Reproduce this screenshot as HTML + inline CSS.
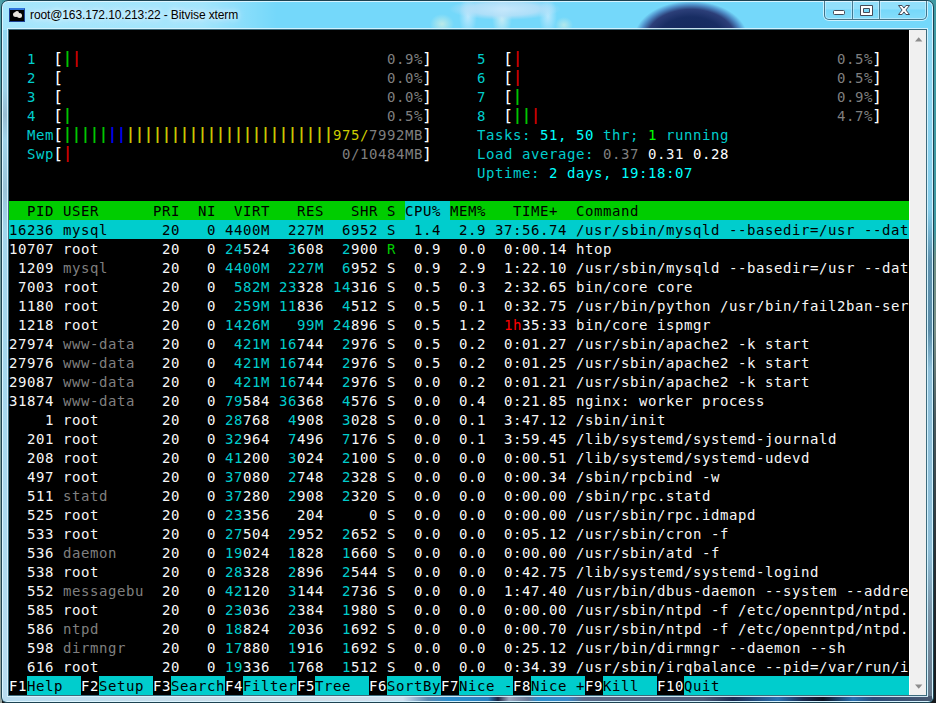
<!DOCTYPE html>
<html><head><meta charset="utf-8"><title>root@163.172.10.213:22 - Bitvise xterm</title>
<style>
html,body{margin:0;padding:0;}
body{width:936px;height:703px;overflow:hidden;position:relative;background:#2a3438;}
#desk{position:absolute;left:0;top:0;width:936px;height:703px;
 background:linear-gradient(180deg,#3f99a3 0px,#3f99a3 230px,#6f8f85 260px,#7a9088 330px,#4a5a5e 420px,#2a3034 560px,#15181c 703px);}
#deskL{position:absolute;left:0;top:0;width:2px;height:703px;background:linear-gradient(180deg,#4fa0a8 0,#4fa0a8 80px,#7a8f8a 120px,#6f9a9c 250px,#7fa09a 450px,#9aa59f 703px);}
#win{position:absolute;left:1px;top:0;width:931px;height:701px;border:1px solid #1d4352;border-radius:7px 7px 6px 6px;
 background:
  radial-gradient(ellipse 57px 38px at 689px 38px,#14285a 0,#182d63 58%,#2c3f79 78%,rgba(60,105,175,.65) 90%,rgba(116,216,250,0) 100%),
  radial-gradient(ellipse 56px 11px at 503px 8px,rgba(200,232,252,.95) 0,rgba(184,224,248,.85) 60%,rgba(116,216,250,0) 100%),
  radial-gradient(ellipse 9px 20px at 466px 15px,rgba(205,236,254,.8) 0,rgba(116,216,250,0) 100%),
  radial-gradient(ellipse 10px 19px at 500px 17px,rgba(215,240,245,.85) 0,rgba(116,216,250,0) 100%),
  radial-gradient(ellipse 9px 19px at 546px 15px,rgba(205,236,254,.75) 0,rgba(116,216,250,0) 100%),
  radial-gradient(ellipse 12px 10px at 440px 23px,rgba(205,238,228,.8) 0,rgba(116,216,250,0) 100%),
  radial-gradient(ellipse 9px 8px at 562px 24px,rgba(205,238,228,.7) 0,rgba(116,216,250,0) 100%),
  linear-gradient(90deg,rgba(255,255,255,.36) 0,rgba(255,255,255,.34) 200px,rgba(255,255,255,0) 275px),
  #74d8fa;
 box-shadow:inset 0 0 0 1px rgba(230,248,255,.85);overflow:hidden;}
#frameL,#frameR,#frameB{position:absolute;}
#frameL{left:1px;top:29px;width:5px;height:668px;background:linear-gradient(180deg,#93d8f1 0,#9dd2e8 60px,#98bdd2 85px,#a0d4ea 110px,#9ac4d8 160px,#a3d6ec 200px,#a6d8ee 400px,#b0daee 560px,#b8dcf0 668px);}
#frameR{left:926px;top:29px;width:4px;height:668px;background:linear-gradient(180deg,#8fd8f4 0,#86cdea 180px,#5f93b0 230px,#5a8ca8 300px,#8fc0da 340px,#8fbfd8 520px,#7d97aa 580px,#66788a 668px);}
#frameB{left:1px;top:695px;width:929px;height:5px;background:linear-gradient(90deg,#b8dcf0 0,#cfdde6 300px,#d0e0f0 400px,#5a88b0 425px,#2a90d0 445px,#2a80c0 485px,#1a2040 495px,#9aa8c0 506px,#6a7a98 525px,#2a90d0 535px,#3a88c8 565px,#5a6a88 580px,#4a5a78 700px,#1a2a50 730px,#2a70b0 775px,#1a2a50 800px,#0a1020 820px,#2a70b0 850px,#2a4a78 870px,#4a5a70 929px);}
#title{position:absolute;left:28px;top:6px;font:12px/16px "Liberation Sans",sans-serif;color:#000;white-space:pre;
 text-shadow:0 0 5px rgba(255,255,255,.75),0 0 9px rgba(255,255,255,.6),0 0 12px rgba(255,255,255,.5);letter-spacing:-0.11px;}
#icon{position:absolute;left:7px;top:7px;width:16px;height:14px;background:#000;border:1px solid #1b3f93;border-top:2px solid #2f74dc;box-sizing:border-box;overflow:hidden;}
#icon i{position:absolute;display:block;background:#e8e4dc;border-radius:50%;}
#caps{position:absolute;left:822px;top:-2px;width:101px;height:19px;border:1px solid rgba(40,80,100,.75);border-radius:0 0 5px 5px;
 box-shadow:0 0 0 1px rgba(225,247,255,.8),inset 0 0 0 1px rgba(215,243,255,.55);background:linear-gradient(180deg,rgba(255,255,255,.22) 0,rgba(255,255,255,.22) 9px,rgba(255,255,255,.02) 10px,rgba(255,255,255,.12) 19px);}
#caps b{position:absolute;top:0;height:19px;width:1px;background:rgba(40,80,100,.7);box-shadow:1px 0 0 rgba(215,243,255,.55),-1px 0 0 rgba(215,243,255,.55);}
#caps svg{position:absolute;left:0;top:0;}
#client{position:absolute;left:6px;top:28px;width:917px;height:665px;border:1px solid #3d6b7c;outline:1px solid rgba(220,245,255,.9);background:#000;}
#term{position:absolute;left:0;top:0;width:900px;height:665px;background:#000;overflow:hidden;font-family:'DejaVu Sans Mono','Liberation Mono',monospace;font-size:14px;letter-spacing:0.5715px;}
.r{position:absolute;left:0;width:900px;height:19px;line-height:19px;white-space:pre;}
.r span{position:absolute;top:0;height:19px;display:block;line-height:21px;}
.r span.b{transform:scaleY(1.15);transform-origin:0 18.5px;text-shadow:.5px 0 0 currentColor;}
.r span.k{transform:scale(1.2,1.08);transform-origin:4.5px 18px;}
#sb{position:absolute;left:900px;top:0;width:17px;height:665px;background:#f0f0f0;border-left:1px solid #fff;box-sizing:border-box;}
</style></head><body>
<div id="desk"></div><div id="deskL"></div>
<div id="win">
 <div id="frameL"></div><div id="frameR"></div><div id="frameB"></div>
 <div id="icon"><i style="left:3px;top:2px;width:6px;height:5px"></i><i style="left:7px;top:3px;width:5px;height:5px"></i><i style="left:5px;top:1px;width:4px;height:4px"></i></div>
 <div id="title">root@163.172.10.213:22 - Bitvise xterm</div>
 <div id="caps"><b style="left:27px"></b><b style="left:54px"></b>
  <svg width="101" height="19" viewBox="0 0 101 19">
   <rect x="8.5" y="10.5" width="11" height="4" rx="1" fill="#fff" stroke="#454a58" stroke-width="1"/>
   <path d="M35.5 5.5h12v10h-12z M38.5 8.5v4h6v-4z" fill="#fff" fill-rule="evenodd" stroke="#454a58" stroke-width="1" stroke-linejoin="round"/>
   <path d="M73.5 5.5h3.6l1.9 2.6 1.9-2.6h3.6l-3.6 4.5 3.6 4.5h-3.6l-1.9-2.6-1.9 2.6h-3.6l3.6-4.5z" fill="#fff" stroke="#454a58" stroke-width="1" stroke-linejoin="round"/>
  </svg>
 </div>
 <div id="client">
  <div id="term">
<div class="r" style="top:19px"><span style="left:18px;color:#00cdcd;">1  </span><span class="k" style="left:45px;color:#ffffff;">[</span><span class="b" style="left:54px;color:#00cd00;">|</span><span class="b" style="left:63px;color:#cd0000;">|</span><span style="left:378px;color:#7f7f7f;">0.9%</span><span class="k" style="left:414px;color:#ffffff;">]</span><span style="left:468px;color:#00cdcd;">5  </span><span class="k" style="left:495px;color:#ffffff;">[</span><span class="b" style="left:504px;color:#cd0000;">|</span><span style="left:828px;color:#7f7f7f;">0.5%</span><span class="k" style="left:864px;color:#ffffff;">]</span></div>
<div class="r" style="top:38px"><span style="left:18px;color:#00cdcd;">2  </span><span class="k" style="left:45px;color:#ffffff;">[</span><span style="left:378px;color:#7f7f7f;">0.0%</span><span class="k" style="left:414px;color:#ffffff;">]</span><span style="left:468px;color:#00cdcd;">6  </span><span class="k" style="left:495px;color:#ffffff;">[</span><span class="b" style="left:504px;color:#cd0000;">|</span><span style="left:828px;color:#7f7f7f;">0.5%</span><span class="k" style="left:864px;color:#ffffff;">]</span></div>
<div class="r" style="top:57px"><span style="left:18px;color:#00cdcd;">3  </span><span class="k" style="left:45px;color:#ffffff;">[</span><span style="left:378px;color:#7f7f7f;">0.0%</span><span class="k" style="left:414px;color:#ffffff;">]</span><span style="left:468px;color:#00cdcd;">7  </span><span class="k" style="left:495px;color:#ffffff;">[</span><span class="b" style="left:504px;color:#00cd00;">|</span><span style="left:828px;color:#7f7f7f;">0.9%</span><span class="k" style="left:864px;color:#ffffff;">]</span></div>
<div class="r" style="top:76px"><span style="left:18px;color:#00cdcd;">4  </span><span class="k" style="left:45px;color:#ffffff;">[</span><span class="b" style="left:54px;color:#00cd00;">|</span><span style="left:378px;color:#7f7f7f;">0.5%</span><span class="k" style="left:414px;color:#ffffff;">]</span><span style="left:468px;color:#00cdcd;">8  </span><span class="k" style="left:495px;color:#ffffff;">[</span><span class="b" style="left:504px;color:#00cd00;">||</span><span class="b" style="left:522px;color:#cd0000;">|</span><span style="left:828px;color:#7f7f7f;">4.7%</span><span class="k" style="left:864px;color:#ffffff;">]</span></div>
<div class="r" style="top:95px"><span style="left:18px;color:#00cdcd;">Mem</span><span class="k" style="left:45px;color:#ffffff;">[</span><span class="b" style="left:54px;color:#00cd00;">|||||</span><span class="b" style="left:99px;color:#0000ee;">||</span><span class="b" style="left:117px;color:#cdcd00;">|||||||||||||||||||||||</span><span style="left:324px;color:#cdcd00;">975/</span><span style="left:360px;color:#7f7f7f;">7992MB</span><span class="k" style="left:414px;color:#ffffff;">]</span><span style="left:468px;color:#00cdcd;">Tasks: </span><span style="left:531px;color:#00ffff;">51</span><span style="left:549px;color:#00ffff;">, </span><span style="left:567px;color:#00ffff;">50</span><span style="left:585px;color:#00cdcd;"> thr; </span><span style="left:639px;color:#00ff00;">1</span><span style="left:648px;color:#00cdcd;"> running</span></div>
<div class="r" style="top:114px"><span style="left:18px;color:#00cdcd;">Swp</span><span class="k" style="left:45px;color:#ffffff;">[</span><span class="b" style="left:54px;color:#cd0000;">|</span><span style="left:333px;color:#7f7f7f;">0/10484MB</span><span class="k" style="left:414px;color:#ffffff;">]</span><span style="left:468px;color:#00cdcd;">Load average: </span><span style="left:594px;color:#7f7f7f;">0.37 </span><span style="left:639px;color:#f7f7f7;">0.31 </span><span style="left:684px;color:#ffffff;">0.28</span></div>
<div class="r" style="top:133px"><span style="left:468px;color:#00cdcd;">Uptime: </span><span style="left:540px;color:#00ffff;">2 days, 19:18:07</span></div>
<div class="r" style="top:171px"><span style="left:0px;color:#000000;background:#00cd00;width:396px;">  PID USER      PRI  NI  VIRT   RES   SHR S </span><span style="left:396px;color:#000000;background:#00cdcd;width:45px;">CPU% </span><span style="left:441px;color:#000000;background:#00cd00;width:459px;">MEM%   TIME+  Command                              </span></div>
<div class="r" style="top:190px"><span style="left:0px;color:#000000;background:#00cdcd;width:900px;">16236 mysql      20   0 4400M  227M  6952 S  1.4  2.9 37:56.74 /usr/sbin/mysqld --basedir=/usr --dat</span></div>
<div class="r" style="top:209px"><span style="left:0px;color:#f7f7f7;">10707</span><span style="left:54px;color:#f7f7f7;">root</span><span style="left:144px;color:#f7f7f7;"> 20   0</span><span style="left:216px;color:#00cdcd;">24</span><span style="left:234px;color:#f7f7f7;">524</span><span style="left:270px;color:#00cdcd;"> 3</span><span style="left:288px;color:#f7f7f7;">608</span><span style="left:324px;color:#00cdcd;"> 2</span><span style="left:342px;color:#f7f7f7;">900</span><span style="left:378px;color:#00cd00;">R</span><span style="left:396px;color:#f7f7f7;"> 0.9  0.0</span><span style="left:486px;color:#f7f7f7;"> 0:00.14</span><span style="left:567px;color:#f7f7f7;">htop</span></div>
<div class="r" style="top:228px"><span style="left:0px;color:#f7f7f7;"> 1209</span><span style="left:54px;color:#7f7f7f;">mysql</span><span style="left:144px;color:#f7f7f7;"> 20   0</span><span style="left:216px;color:#00cdcd;">4400M</span><span style="left:270px;color:#00cdcd;"> 227M</span><span style="left:324px;color:#00cdcd;"> 6</span><span style="left:342px;color:#f7f7f7;">952</span><span style="left:378px;color:#f7f7f7;">S</span><span style="left:396px;color:#f7f7f7;"> 0.9  2.9</span><span style="left:486px;color:#f7f7f7;"> 1:22.10</span><span style="left:567px;color:#f7f7f7;">/usr/sbin/mysqld --basedir=/usr --dat</span></div>
<div class="r" style="top:247px"><span style="left:0px;color:#f7f7f7;"> 7003</span><span style="left:54px;color:#f7f7f7;">root</span><span style="left:144px;color:#f7f7f7;"> 20   0</span><span style="left:216px;color:#00cdcd;"> 582M</span><span style="left:270px;color:#00cdcd;">23</span><span style="left:288px;color:#f7f7f7;">328</span><span style="left:324px;color:#00cdcd;">14</span><span style="left:342px;color:#f7f7f7;">316</span><span style="left:378px;color:#f7f7f7;">S</span><span style="left:396px;color:#f7f7f7;"> 0.5  0.3</span><span style="left:486px;color:#f7f7f7;"> 2:32.65</span><span style="left:567px;color:#f7f7f7;">bin/core core</span></div>
<div class="r" style="top:266px"><span style="left:0px;color:#f7f7f7;"> 1180</span><span style="left:54px;color:#f7f7f7;">root</span><span style="left:144px;color:#f7f7f7;"> 20   0</span><span style="left:216px;color:#00cdcd;"> 259M</span><span style="left:270px;color:#00cdcd;">11</span><span style="left:288px;color:#f7f7f7;">836</span><span style="left:324px;color:#00cdcd;"> 4</span><span style="left:342px;color:#f7f7f7;">512</span><span style="left:378px;color:#f7f7f7;">S</span><span style="left:396px;color:#f7f7f7;"> 0.5  0.1</span><span style="left:486px;color:#f7f7f7;"> 0:32.75</span><span style="left:567px;color:#f7f7f7;">/usr/bin/python /usr/bin/fail2ban-ser</span></div>
<div class="r" style="top:285px"><span style="left:0px;color:#f7f7f7;"> 1218</span><span style="left:54px;color:#f7f7f7;">root</span><span style="left:144px;color:#f7f7f7;"> 20   0</span><span style="left:216px;color:#00cdcd;">1426M</span><span style="left:270px;color:#00cdcd;">  99M</span><span style="left:324px;color:#00cdcd;">24</span><span style="left:342px;color:#f7f7f7;">896</span><span style="left:378px;color:#f7f7f7;">S</span><span style="left:396px;color:#f7f7f7;"> 0.5  1.2</span><span style="left:486px;color:#ff0000;"> 1h</span><span style="left:513px;color:#f7f7f7;">35:33</span><span style="left:567px;color:#f7f7f7;">bin/core ispmgr</span></div>
<div class="r" style="top:304px"><span style="left:0px;color:#f7f7f7;">27974</span><span style="left:54px;color:#7f7f7f;">www-data</span><span style="left:144px;color:#f7f7f7;"> 20   0</span><span style="left:216px;color:#00cdcd;"> 421M</span><span style="left:270px;color:#00cdcd;">16</span><span style="left:288px;color:#f7f7f7;">744</span><span style="left:324px;color:#00cdcd;"> 2</span><span style="left:342px;color:#f7f7f7;">976</span><span style="left:378px;color:#f7f7f7;">S</span><span style="left:396px;color:#f7f7f7;"> 0.5  0.2</span><span style="left:486px;color:#f7f7f7;"> 0:01.27</span><span style="left:567px;color:#f7f7f7;">/usr/sbin/apache2 -k start</span></div>
<div class="r" style="top:323px"><span style="left:0px;color:#f7f7f7;">27976</span><span style="left:54px;color:#7f7f7f;">www-data</span><span style="left:144px;color:#f7f7f7;"> 20   0</span><span style="left:216px;color:#00cdcd;"> 421M</span><span style="left:270px;color:#00cdcd;">16</span><span style="left:288px;color:#f7f7f7;">744</span><span style="left:324px;color:#00cdcd;"> 2</span><span style="left:342px;color:#f7f7f7;">976</span><span style="left:378px;color:#f7f7f7;">S</span><span style="left:396px;color:#f7f7f7;"> 0.5  0.2</span><span style="left:486px;color:#f7f7f7;"> 0:01.25</span><span style="left:567px;color:#f7f7f7;">/usr/sbin/apache2 -k start</span></div>
<div class="r" style="top:342px"><span style="left:0px;color:#f7f7f7;">29087</span><span style="left:54px;color:#7f7f7f;">www-data</span><span style="left:144px;color:#f7f7f7;"> 20   0</span><span style="left:216px;color:#00cdcd;"> 421M</span><span style="left:270px;color:#00cdcd;">16</span><span style="left:288px;color:#f7f7f7;">744</span><span style="left:324px;color:#00cdcd;"> 2</span><span style="left:342px;color:#f7f7f7;">976</span><span style="left:378px;color:#f7f7f7;">S</span><span style="left:396px;color:#f7f7f7;"> 0.0  0.2</span><span style="left:486px;color:#f7f7f7;"> 0:01.21</span><span style="left:567px;color:#f7f7f7;">/usr/sbin/apache2 -k start</span></div>
<div class="r" style="top:361px"><span style="left:0px;color:#f7f7f7;">31874</span><span style="left:54px;color:#7f7f7f;">www-data</span><span style="left:144px;color:#f7f7f7;"> 20   0</span><span style="left:216px;color:#00cdcd;">79</span><span style="left:234px;color:#f7f7f7;">584</span><span style="left:270px;color:#00cdcd;">36</span><span style="left:288px;color:#f7f7f7;">368</span><span style="left:324px;color:#00cdcd;"> 4</span><span style="left:342px;color:#f7f7f7;">576</span><span style="left:378px;color:#f7f7f7;">S</span><span style="left:396px;color:#f7f7f7;"> 0.0  0.4</span><span style="left:486px;color:#f7f7f7;"> 0:21.85</span><span style="left:567px;color:#f7f7f7;">nginx: worker process</span></div>
<div class="r" style="top:380px"><span style="left:0px;color:#f7f7f7;">    1</span><span style="left:54px;color:#f7f7f7;">root</span><span style="left:144px;color:#f7f7f7;"> 20   0</span><span style="left:216px;color:#00cdcd;">28</span><span style="left:234px;color:#f7f7f7;">768</span><span style="left:270px;color:#00cdcd;"> 4</span><span style="left:288px;color:#f7f7f7;">908</span><span style="left:324px;color:#00cdcd;"> 3</span><span style="left:342px;color:#f7f7f7;">028</span><span style="left:378px;color:#f7f7f7;">S</span><span style="left:396px;color:#f7f7f7;"> 0.0  0.1</span><span style="left:486px;color:#f7f7f7;"> 3:47.12</span><span style="left:567px;color:#f7f7f7;">/sbin/init</span></div>
<div class="r" style="top:399px"><span style="left:0px;color:#f7f7f7;">  201</span><span style="left:54px;color:#f7f7f7;">root</span><span style="left:144px;color:#f7f7f7;"> 20   0</span><span style="left:216px;color:#00cdcd;">32</span><span style="left:234px;color:#f7f7f7;">964</span><span style="left:270px;color:#00cdcd;"> 7</span><span style="left:288px;color:#f7f7f7;">496</span><span style="left:324px;color:#00cdcd;"> 7</span><span style="left:342px;color:#f7f7f7;">176</span><span style="left:378px;color:#f7f7f7;">S</span><span style="left:396px;color:#f7f7f7;"> 0.0  0.1</span><span style="left:486px;color:#f7f7f7;"> 3:59.45</span><span style="left:567px;color:#f7f7f7;">/lib/systemd/systemd-journald</span></div>
<div class="r" style="top:418px"><span style="left:0px;color:#f7f7f7;">  208</span><span style="left:54px;color:#f7f7f7;">root</span><span style="left:144px;color:#f7f7f7;"> 20   0</span><span style="left:216px;color:#00cdcd;">41</span><span style="left:234px;color:#f7f7f7;">200</span><span style="left:270px;color:#00cdcd;"> 3</span><span style="left:288px;color:#f7f7f7;">024</span><span style="left:324px;color:#00cdcd;"> 2</span><span style="left:342px;color:#f7f7f7;">100</span><span style="left:378px;color:#f7f7f7;">S</span><span style="left:396px;color:#f7f7f7;"> 0.0  0.0</span><span style="left:486px;color:#f7f7f7;"> 0:00.51</span><span style="left:567px;color:#f7f7f7;">/lib/systemd/systemd-udevd</span></div>
<div class="r" style="top:437px"><span style="left:0px;color:#f7f7f7;">  497</span><span style="left:54px;color:#f7f7f7;">root</span><span style="left:144px;color:#f7f7f7;"> 20   0</span><span style="left:216px;color:#00cdcd;">37</span><span style="left:234px;color:#f7f7f7;">080</span><span style="left:270px;color:#00cdcd;"> 2</span><span style="left:288px;color:#f7f7f7;">748</span><span style="left:324px;color:#00cdcd;"> 2</span><span style="left:342px;color:#f7f7f7;">328</span><span style="left:378px;color:#f7f7f7;">S</span><span style="left:396px;color:#f7f7f7;"> 0.0  0.0</span><span style="left:486px;color:#f7f7f7;"> 0:00.34</span><span style="left:567px;color:#f7f7f7;">/sbin/rpcbind -w</span></div>
<div class="r" style="top:456px"><span style="left:0px;color:#f7f7f7;">  511</span><span style="left:54px;color:#7f7f7f;">statd</span><span style="left:144px;color:#f7f7f7;"> 20   0</span><span style="left:216px;color:#00cdcd;">37</span><span style="left:234px;color:#f7f7f7;">280</span><span style="left:270px;color:#00cdcd;"> 2</span><span style="left:288px;color:#f7f7f7;">908</span><span style="left:324px;color:#00cdcd;"> 2</span><span style="left:342px;color:#f7f7f7;">320</span><span style="left:378px;color:#f7f7f7;">S</span><span style="left:396px;color:#f7f7f7;"> 0.0  0.0</span><span style="left:486px;color:#f7f7f7;"> 0:00.00</span><span style="left:567px;color:#f7f7f7;">/sbin/rpc.statd</span></div>
<div class="r" style="top:475px"><span style="left:0px;color:#f7f7f7;">  525</span><span style="left:54px;color:#f7f7f7;">root</span><span style="left:144px;color:#f7f7f7;"> 20   0</span><span style="left:216px;color:#00cdcd;">23</span><span style="left:234px;color:#f7f7f7;">356</span><span style="left:270px;color:#f7f7f7;">  204</span><span style="left:324px;color:#f7f7f7;">    0</span><span style="left:378px;color:#f7f7f7;">S</span><span style="left:396px;color:#f7f7f7;"> 0.0  0.0</span><span style="left:486px;color:#f7f7f7;"> 0:00.00</span><span style="left:567px;color:#f7f7f7;">/usr/sbin/rpc.idmapd</span></div>
<div class="r" style="top:494px"><span style="left:0px;color:#f7f7f7;">  533</span><span style="left:54px;color:#f7f7f7;">root</span><span style="left:144px;color:#f7f7f7;"> 20   0</span><span style="left:216px;color:#00cdcd;">27</span><span style="left:234px;color:#f7f7f7;">504</span><span style="left:270px;color:#00cdcd;"> 2</span><span style="left:288px;color:#f7f7f7;">952</span><span style="left:324px;color:#00cdcd;"> 2</span><span style="left:342px;color:#f7f7f7;">652</span><span style="left:378px;color:#f7f7f7;">S</span><span style="left:396px;color:#f7f7f7;"> 0.0  0.0</span><span style="left:486px;color:#f7f7f7;"> 0:05.12</span><span style="left:567px;color:#f7f7f7;">/usr/sbin/cron -f</span></div>
<div class="r" style="top:513px"><span style="left:0px;color:#f7f7f7;">  536</span><span style="left:54px;color:#7f7f7f;">daemon</span><span style="left:144px;color:#f7f7f7;"> 20   0</span><span style="left:216px;color:#00cdcd;">19</span><span style="left:234px;color:#f7f7f7;">024</span><span style="left:270px;color:#00cdcd;"> 1</span><span style="left:288px;color:#f7f7f7;">828</span><span style="left:324px;color:#00cdcd;"> 1</span><span style="left:342px;color:#f7f7f7;">660</span><span style="left:378px;color:#f7f7f7;">S</span><span style="left:396px;color:#f7f7f7;"> 0.0  0.0</span><span style="left:486px;color:#f7f7f7;"> 0:00.00</span><span style="left:567px;color:#f7f7f7;">/usr/sbin/atd -f</span></div>
<div class="r" style="top:532px"><span style="left:0px;color:#f7f7f7;">  538</span><span style="left:54px;color:#f7f7f7;">root</span><span style="left:144px;color:#f7f7f7;"> 20   0</span><span style="left:216px;color:#00cdcd;">28</span><span style="left:234px;color:#f7f7f7;">328</span><span style="left:270px;color:#00cdcd;"> 2</span><span style="left:288px;color:#f7f7f7;">896</span><span style="left:324px;color:#00cdcd;"> 2</span><span style="left:342px;color:#f7f7f7;">544</span><span style="left:378px;color:#f7f7f7;">S</span><span style="left:396px;color:#f7f7f7;"> 0.0  0.0</span><span style="left:486px;color:#f7f7f7;"> 0:42.75</span><span style="left:567px;color:#f7f7f7;">/lib/systemd/systemd-logind</span></div>
<div class="r" style="top:551px"><span style="left:0px;color:#f7f7f7;">  552</span><span style="left:54px;color:#7f7f7f;">messagebu</span><span style="left:144px;color:#f7f7f7;"> 20   0</span><span style="left:216px;color:#00cdcd;">42</span><span style="left:234px;color:#f7f7f7;">120</span><span style="left:270px;color:#00cdcd;"> 3</span><span style="left:288px;color:#f7f7f7;">144</span><span style="left:324px;color:#00cdcd;"> 2</span><span style="left:342px;color:#f7f7f7;">736</span><span style="left:378px;color:#f7f7f7;">S</span><span style="left:396px;color:#f7f7f7;"> 0.0  0.0</span><span style="left:486px;color:#f7f7f7;"> 1:47.40</span><span style="left:567px;color:#f7f7f7;">/usr/bin/dbus-daemon --system --addre</span></div>
<div class="r" style="top:570px"><span style="left:0px;color:#f7f7f7;">  585</span><span style="left:54px;color:#f7f7f7;">root</span><span style="left:144px;color:#f7f7f7;"> 20   0</span><span style="left:216px;color:#00cdcd;">23</span><span style="left:234px;color:#f7f7f7;">036</span><span style="left:270px;color:#00cdcd;"> 2</span><span style="left:288px;color:#f7f7f7;">384</span><span style="left:324px;color:#00cdcd;"> 1</span><span style="left:342px;color:#f7f7f7;">980</span><span style="left:378px;color:#f7f7f7;">S</span><span style="left:396px;color:#f7f7f7;"> 0.0  0.0</span><span style="left:486px;color:#f7f7f7;"> 0:00.00</span><span style="left:567px;color:#f7f7f7;">/usr/sbin/ntpd -f /etc/openntpd/ntpd.</span></div>
<div class="r" style="top:589px"><span style="left:0px;color:#f7f7f7;">  586</span><span style="left:54px;color:#7f7f7f;">ntpd</span><span style="left:144px;color:#f7f7f7;"> 20   0</span><span style="left:216px;color:#00cdcd;">18</span><span style="left:234px;color:#f7f7f7;">824</span><span style="left:270px;color:#00cdcd;"> 2</span><span style="left:288px;color:#f7f7f7;">036</span><span style="left:324px;color:#00cdcd;"> 1</span><span style="left:342px;color:#f7f7f7;">692</span><span style="left:378px;color:#f7f7f7;">S</span><span style="left:396px;color:#f7f7f7;"> 0.0  0.0</span><span style="left:486px;color:#f7f7f7;"> 0:00.70</span><span style="left:567px;color:#f7f7f7;">/usr/sbin/ntpd -f /etc/openntpd/ntpd.</span></div>
<div class="r" style="top:608px"><span style="left:0px;color:#f7f7f7;">  598</span><span style="left:54px;color:#7f7f7f;">dirmngr</span><span style="left:144px;color:#f7f7f7;"> 20   0</span><span style="left:216px;color:#00cdcd;">17</span><span style="left:234px;color:#f7f7f7;">880</span><span style="left:270px;color:#00cdcd;"> 1</span><span style="left:288px;color:#f7f7f7;">916</span><span style="left:324px;color:#00cdcd;"> 1</span><span style="left:342px;color:#f7f7f7;">692</span><span style="left:378px;color:#f7f7f7;">S</span><span style="left:396px;color:#f7f7f7;"> 0.0  0.0</span><span style="left:486px;color:#f7f7f7;"> 0:25.12</span><span style="left:567px;color:#f7f7f7;">/usr/bin/dirmngr --daemon --sh</span></div>
<div class="r" style="top:627px"><span style="left:0px;color:#f7f7f7;">  616</span><span style="left:54px;color:#f7f7f7;">root</span><span style="left:144px;color:#f7f7f7;"> 20   0</span><span style="left:216px;color:#00cdcd;">19</span><span style="left:234px;color:#f7f7f7;">336</span><span style="left:270px;color:#00cdcd;"> 1</span><span style="left:288px;color:#f7f7f7;">768</span><span style="left:324px;color:#00cdcd;"> 1</span><span style="left:342px;color:#f7f7f7;">512</span><span style="left:378px;color:#f7f7f7;">S</span><span style="left:396px;color:#f7f7f7;"> 0.0  0.0</span><span style="left:486px;color:#f7f7f7;"> 0:34.39</span><span style="left:567px;color:#f7f7f7;">/usr/sbin/irqbalance --pid=/var/run/i</span></div>
<div class="r" style="top:646px"><span style="left:0px;color:#ffffff;background:#000000;width:18px;">F1</span><span style="left:18px;color:#000000;background:#00cdcd;width:54px;">Help  </span><span style="left:72px;color:#ffffff;background:#000000;width:18px;">F2</span><span style="left:90px;color:#000000;background:#00cdcd;width:54px;">Setup </span><span style="left:144px;color:#ffffff;background:#000000;width:18px;">F3</span><span style="left:162px;color:#000000;background:#00cdcd;width:54px;">Search</span><span style="left:216px;color:#ffffff;background:#000000;width:18px;">F4</span><span style="left:234px;color:#000000;background:#00cdcd;width:54px;">Filter</span><span style="left:288px;color:#ffffff;background:#000000;width:18px;">F5</span><span style="left:306px;color:#000000;background:#00cdcd;width:54px;">Tree  </span><span style="left:360px;color:#ffffff;background:#000000;width:18px;">F6</span><span style="left:378px;color:#000000;background:#00cdcd;width:54px;">SortBy</span><span style="left:432px;color:#ffffff;background:#000000;width:18px;">F7</span><span style="left:450px;color:#000000;background:#00cdcd;width:54px;">Nice -</span><span style="left:504px;color:#ffffff;background:#000000;width:18px;">F8</span><span style="left:522px;color:#000000;background:#00cdcd;width:54px;">Nice +</span><span style="left:576px;color:#ffffff;background:#000000;width:18px;">F9</span><span style="left:594px;color:#000000;background:#00cdcd;width:54px;">Kill  </span><span style="left:648px;color:#ffffff;background:#000000;width:27px;">F10</span><span style="left:675px;color:#000000;background:#00cdcd;width:225px;">Quit                     </span></div>
  </div>
  <div id="sb"><svg width="17" height="665" viewBox="0 0 17 665" style="position:absolute;left:-1px;top:0"><path d="M6 11.5h7.4l-3.7-4.3z" fill="#8c8c8c"/><path d="M6 654.5h7.4l-3.7 4.3z" fill="#8c8c8c"/></svg></div>
 </div>
</div>
</body></html>
